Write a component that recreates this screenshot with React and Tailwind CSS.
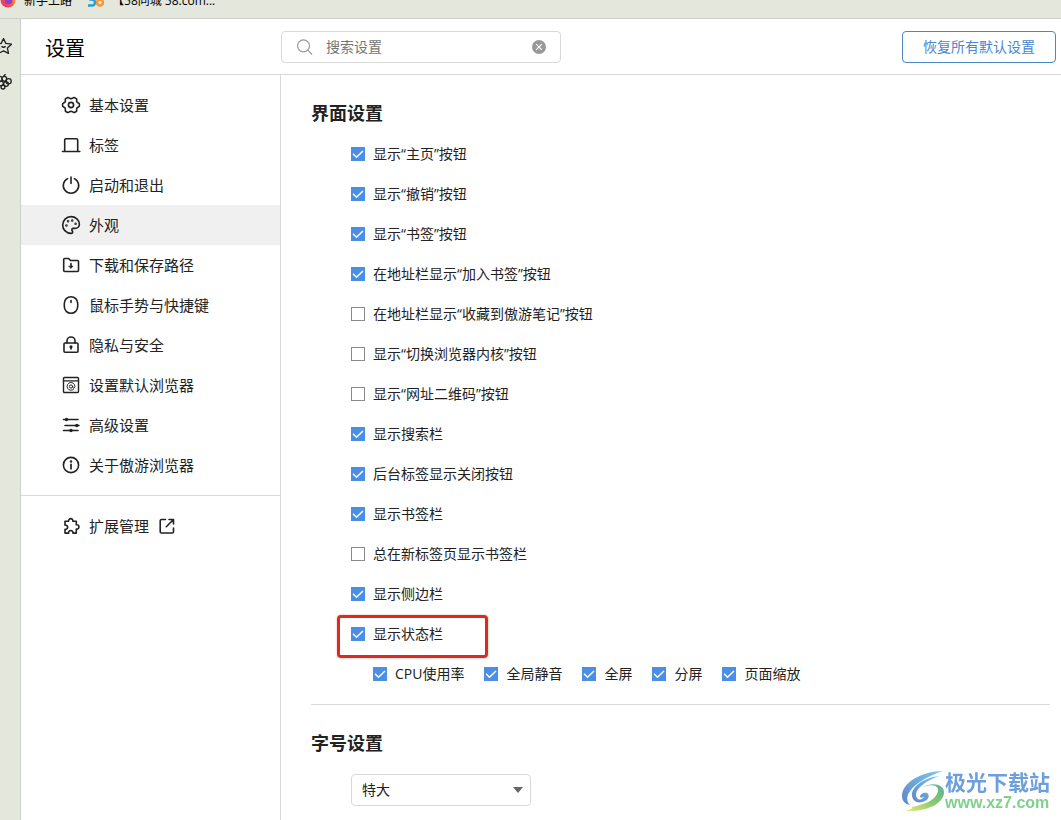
import React, { useState } from 'react';
import { Palette } from 'lucide-react';

const Icon = ({ children }) => (
    <svg
        viewBox="0 0 20 20"
        className="size-5 shrink-0"
        fill="none"
        stroke="currentColor"
        strokeWidth="1.6"
        strokeLinecap="round"
        strokeLinejoin="round"
        aria-hidden="true"
    >
        {children}
    </svg>
);

const icons = {
    gear: (
        <Icon>
            <path d="M18.3 8.6q.3 1.4 0 2.8l-2.1 1.3q-.5.4-.5.9l-.1 2.5q-1 1-2.5 1.5l-2.2-1.1q-.9-.3-1.8 0l-2.2 1.1q-1.5-.5-2.5-1.5l-.1-2.5q0-.5-.5-.9L1.700 11.400q-.3-1.400 0-2.800l2.100-1.300q.5-.4.5-.9l.1-2.500q1-1 2.500-1.500l2.200 1.100q.9.3 1.800 0l2.200-1.100q1.500.5 2.500 1.500l.1 2.500q0 .5.5.9z" />
            <circle cx="10" cy="10" r="2.6" />
        </Icon>
    ),
    tab: (
        <Icon>
            <path d="M1.500 16.500h17.300M3.700 16.500V5A1.300 1.300 0 0 1 5 3.700h10.400A1.300 1.300 0 0 1 16.700 5v11.500" />
        </Icon>
    ),
    power: (
        <Icon>
            <path d="M6.600 3.600a7.700 7.700 0 1 0 6.800 0M10 2v6.500" />
        </Icon>
    ),
    palette: <Palette className="size-5 shrink-0" strokeWidth={2} aria-hidden="true" />,
    folder: (
        <Icon>
            <path d="M2.700 4.500a1 1 0 0 1 1-1h4l1.800 2h7a1 1 0 0 1 1 1v9a1 1 0 0 1-1 1H3.700a1 1 0 0 1-1-1zM10 8.500v3" />
            <path d="M7.800 11h4.400L10 13.600z" fill="currentColor" strokeWidth="0.4" />
        </Icon>
    ),
    mouse: (
        <Icon>
            <rect x="3.300" y="1.700" width="13.400" height="16.600" rx="6.700" />
            <path d="M10 5.500v2" />
        </Icon>
    ),
    lock: (
        <Icon>
            <rect x="3" y="8" width="14" height="9.300" rx="1" />
            <path d="M6 8V6a4 4 0 0 1 8 0v2M10 12v2" />
            <circle cx="10" cy="11.800" r="0.800" fill="currentColor" />
        </Icon>
    ),
    browser: (
        <Icon>
            <rect x="2.500" y="2.500" width="15" height="15" rx="1" strokeWidth="1.400" />
            <path d="M2.500 5.900h15" strokeWidth="1.400" />
            <path d="M12.600 14.300a3.900 3.900 0 1 1 1.300-2.800q-.1 1.600-1.200 1.600-1 0-1-1.300" strokeWidth="1" />
            <circle cx="10" cy="11.500" r="1.600" strokeWidth="1" />
        </Icon>
    ),
    sliders: (
        <Icon>
            <path d="M2.500 4.500h14.500M4 10.500h14M2.500 15.500h14.500" />
            <g fill="currentColor" stroke="none">
                <circle cx="5.500" cy="4.500" r="1.700" />
                <circle cx="15.800" cy="10.500" r="1.700" />
                <circle cx="10" cy="15.500" r="1.700" />
            </g>
        </Icon>
    ),
    info: (
        <Icon>
            <circle cx="10" cy="10" r="7.600" />
            <path d="M10 9.300v4.500" strokeWidth="1.700" />
            <circle cx="10" cy="6.500" r="0.500" fill="currentColor" />
        </Icon>
    ),
    puzzle: (
        <Icon>
            <path d="M4 5.300h3.600a2.200 2.200 0 1 1 4.300 0h3.400v3.500a2.200 2.200 0 1 1 0 4.300v4h-3.400a2.200 2.200 0 1 0-4.300 0H4v-3.700a2.200 2.200 0 1 0 0-4.300z" />
        </Icon>
    ),
    external: (
        <Icon>
            <path d="M8.500 3.500H4.500a1.300 1.300 0 0 0-1.300 1.300v10.900A1.300 1.300 0 0 0 4.500 17h10.700a1.300 1.300 0 0 0 1.300-1.300V12M9.300 10.700l7.200-7.200M12 3.500h4.500V8" />
        </Icon>
    ),
};

const navItems = [
    { label: '基本设置', icon: 'gear' },
    { label: '标签', icon: 'tab' },
    { label: '启动和退出', icon: 'power' },
    { label: '外观', icon: 'palette' },
    { label: '下载和保存路径', icon: 'folder' },
    { label: '鼠标手势与快捷键', icon: 'mouse' },
    { label: '隐私与安全', icon: 'lock' },
    { label: '设置默认浏览器', icon: 'browser' },
    { label: '高级设置', icon: 'sliders' },
    { label: '关于傲游浏览器', icon: 'info' },
];

const interfaceOptions = [
    { label: '显示“主页”按钮', checked: true },
    { label: '显示“撤销”按钮', checked: true },
    { label: '显示“书签”按钮', checked: true },
    { label: '在地址栏显示“加入书签”按钮', checked: true },
    { label: '在地址栏显示“收藏到傲游笔记”按钮', checked: false },
    { label: '显示“切换浏览器内核”按钮', checked: false },
    { label: '显示“网址二维码”按钮', checked: false },
    { label: '显示搜索栏', checked: true },
    { label: '后台标签显示关闭按钮', checked: true },
    { label: '显示书签栏', checked: true },
    { label: '总在新标签页显示书签栏', checked: false },
    { label: '显示侧边栏', checked: true },
    { label: '显示状态栏', checked: true, highlight: true },
];

const statusBarOptions = ['CPU使用率', '全局静音', '全屏', '分屏', '页面缩放'];

const Checkbox = ({ label, defaultChecked }) => (
    <label className="flex items-center gap-2">
        <span className="grid size-3.5 shrink-0">
            <input
                type="checkbox"
                defaultChecked={defaultChecked}
                className="peer col-start-1 row-start-1 size-3.5 appearance-none border border-[#8a8a8a] bg-white checked:border-[#4a8ee6] checked:bg-[#4a8ee6]"
            />
            <svg
                viewBox="0 0 14 14"
                className="pointer-events-none invisible col-start-1 row-start-1 size-3.5 peer-checked:visible"
                fill="none"
                stroke="white"
                strokeWidth="1.5"
                aria-hidden="true"
            >
                <path d="m2 6.800 3.500 3.400L12 4" />
            </svg>
        </span>
        <span>{label}</span>
    </label>
);

const BookmarkBar = () => (
    <div className="h-[19px] overflow-hidden border-b border-[#cdd0c8] bg-[#e3e7dc]">
        <div className="-mt-[7px] flex h-4 items-center text-xs leading-4 whitespace-nowrap text-black">
            <a href="#" className="flex items-center gap-2">
                <svg viewBox="0 0 16 16" className="size-4" aria-hidden="true">
                    <defs>
                        <linearGradient id="fox" x1="1" y1="0" x2="0" y2="1">
                            <stop offset="0" stopColor="#ffc43a" />
                            <stop offset="0.5" stopColor="#ff5a3b" />
                            <stop offset="1" stopColor="#e8267c" />
                        </linearGradient>
                    </defs>
                    <circle cx="8" cy="7" r="7.500" fill="url(#fox)" />
                    <circle cx="8.500" cy="7.500" r="3.800" fill="#8a3fd0" />
                </svg>
                新手上路
            </a>
            <a href="#" className="ml-4 flex items-center gap-2">
                <svg viewBox="0 0 16 16" className="size-4" fill="none" strokeWidth="2.500" aria-hidden="true">
                    <path d="M7 2H2.500v4.500H4a3 3 0 0 1 0 6H0" stroke="#2f9bd0" />
                    <circle cx="12" cy="9.600" r="3" stroke="#f29a3a" />
                    <circle cx="12" cy="4" r="2.300" stroke="#f29a3a" />
                </svg>
                【58同城 58.com...
            </a>
        </div>
    </div>
);

const SideRail = () => (
    <aside className="flex w-[21px] shrink-0 flex-col gap-5 overflow-hidden border-r border-[#cdd0c8] bg-[#e3e7dc] pt-[19px] text-[#222]">
        <svg viewBox="0 0 16 16" className="-ml-1 size-4" fill="none" stroke="currentColor" strokeWidth="1.300" strokeLinejoin="round" aria-hidden="true">
            <path d="m7.500.5 2.300 4.900 5.900.7-4.300 4 1.100 5.300-5-2.600-5 2.600 1.100-5.300-4.300-4 5.900-.7z" />
            <path d="M5.500 8.300q2 2 4.200 0" />
        </svg>
        <svg viewBox="0 0 16 16" className="-ml-1 size-4" fill="none" stroke="currentColor" strokeWidth="1.300" aria-hidden="true">
            <circle cx="3.500" cy="5" r="2.600" />
            <circle cx="8.300" cy="4.700" r="2.400" />
            <circle cx="12.600" cy="7.300" r="2.600" />
            <circle cx="5" cy="9.500" r="2.400" />
            <circle cx="10" cy="10" r="2.400" />
            <circle cx="7" cy="13" r="2" />
            <path d="M7.500 2.500 9.500 0" />
        </svg>
    </aside>
);

const Header = () => {
    const [query, setQuery] = useState('');

    return (
        <header className="flex h-14 items-start border-b border-[#d9d9d9] pt-3 pr-[5px]">
            <h1 className="w-[260px] shrink-0 pl-6 text-xl leading-9 text-black">设置</h1>
            <div className="flex h-8 w-[280px] items-center rounded border border-[#d9d9d9] px-3.5">
                <svg viewBox="0 0 18 18" className="size-[18px] shrink-0 text-[#999]" fill="none" stroke="currentColor" strokeWidth="1.200" aria-hidden="true">
                    <circle cx="7.500" cy="7.800" r="6" />
                    <path d="m11.800 12.200 4.200 4.300" />
                </svg>
                <input
                    type="text"
                    aria-label="搜索设置"
                    placeholder="搜索设置"
                    value={query}
                    onChange={(e) => setQuery(e.target.value)}
                    className="ml-3 min-w-0 flex-1 text-sm outline-none placeholder:text-[#757575]"
                />
                <button type="button" aria-label="清除" onClick={() => setQuery('')}>
                    <svg viewBox="0 0 14 14" className="size-3.5" aria-hidden="true">
                        <circle cx="7" cy="7" r="7" fill="#999" />
                        <path d="m4.200 4.200 5.600 5.600m0-5.600L4.200 9.800" stroke="white" strokeWidth="1.200" />
                    </svg>
                </button>
            </div>
            <button type="button" className="ml-auto h-8 rounded border border-[#4a88c2] px-5 text-sm whitespace-nowrap text-[#4a86d0]">
                恢复所有默认设置
            </button>
        </header>
    );
};

const Sidebar = () => (
    <nav className="w-[260px] shrink-0 border-r border-[#d9d9d9] pt-2.5 text-[15px] text-[#222]">
        {navItems.map((item) => (
            <a
                key={item.label}
                href="#"
                className={`flex h-10 items-center gap-2 pl-10 ${item.label === '外观' ? 'bg-[#f0f0f0]' : ''}`}
            >
                {icons[item.icon]}
                {item.label}
            </a>
        ))}
        <div className="mt-2.5 border-t border-[#d9d9d9] pt-2.5">
            <a href="#" className="flex h-10 items-center gap-2 pl-10">
                {icons.puzzle}
                扩展管理
                {icons.external}
            </a>
        </div>
    </nav>
);

const Watermark = () => (
    <div className="pointer-events-none fixed right-[11px] bottom-2 flex items-center">
        <svg viewBox="0 0 44 42" className="h-[42px] w-11" aria-hidden="true">
            <defs>
                <linearGradient id="swirlBlue" x1="1" y1="0" x2="0" y2="1">
                    <stop offset="0" stopColor="#7cc8f2" />
                    <stop offset="1" stopColor="#5f86c6" />
                </linearGradient>
                <linearGradient id="swirlGreen" x1="1" y1="0" x2="0" y2="1">
                    <stop offset="0" stopColor="#5cae9e" />
                    <stop offset="0.5" stopColor="#86cc6c" />
                    <stop offset="1" stopColor="#e9e67a" />
                </linearGradient>
            </defs>
            <path d="M42 1C22 1 1 12 1 26c0 5 3 8 8 9C1 27 10 12 42 1z" fill="url(#swirlBlue)" />
            <path d="M38 6C22 8 10 17 11 26c1 6 7 8 13 5 4-2 5-6 2-8-3-1-7 1-7 4 1 1 3 1 4-1 0 3-5 5-7 2C12 21 22 12 38 6z" fill="url(#swirlBlue)" />
            <path d="M23 17c9-4 17-1 13 7-4 7-13 11-26 13l2 1-7 3c20 1 37-7 38-18 1-9-13-11-20-6z" fill="url(#swirlGreen)" />
        </svg>
        <div className="whitespace-nowrap">
            <div className="text-[21px] leading-6 font-bold text-[#6c9fdb]">极光下载站</div>
            <div className="font-['Liberation_Sans'] text-base leading-[18px] font-bold text-[#7fd08c]">www.xz7.com</div>
        </div>
    </div>
);

const App = () => (
    <div className="flex min-h-screen flex-col bg-white font-['Open_Sans','Noto_Sans_CJK_SC',sans-serif] text-[#222]">
        <BookmarkBar />
        <div className="flex flex-1">
            <SideRail />
            <div className="flex min-w-0 flex-1 flex-col">
                <Header />
                <div className="flex flex-1">
                    <Sidebar />
                    <main className="min-w-0 flex-1 pr-[11px] pl-[30px] text-sm">
                        <section className="border-b border-[#d9d9d9] pt-[18px] pb-2.5">
                            <h2 className="text-lg leading-10 font-bold">界面设置</h2>
                            <ul className="pt-px pl-10">
                                {interfaceOptions.map((option) => (
                                    <li key={option.label} className="relative flex h-10 items-center">
                                        <Checkbox label={option.label} defaultChecked={option.checked} />
                                        {option.highlight && (
                                            <div className="pointer-events-none absolute top-px -left-[14px] h-[43px] w-[151px] rounded-sm border-3 border-[#dc2a22] shadow-[0_0_2px_#ff9a90]" />
                                        )}
                                    </li>
                                ))}
                            </ul>
                            <div className="flex h-10 items-center gap-5 pl-[62px] whitespace-nowrap">
                                {statusBarOptions.map((label) => (
                                    <Checkbox key={label} label={label} defaultChecked />
                                ))}
                            </div>
                        </section>

                        <section className="pt-[18px]">
                            <h2 id="font-size-title" className="text-lg leading-10 font-bold">字号设置</h2>
                            <div className="mt-[11px] ml-10 grid w-[180px] items-center">
                                <select
                                    aria-labelledby="font-size-title"
                                    defaultValue="特大"
                                    className="col-start-1 row-start-1 h-8 appearance-none rounded border border-[#d9d9d9] bg-white px-2.5"
                                >
                                    <option>小</option>
                                    <option>中</option>
                                    <option>大</option>
                                    <option>特大</option>
                                </select>
                                <svg viewBox="0 0 10 6" className="pointer-events-none col-start-1 row-start-1 mr-2 h-1.5 w-2.5 justify-self-end" aria-hidden="true">
                                    <path d="M0 0h10L5 6z" fill="#666" />
                                </svg>
                            </div>
                        </section>
                    </main>
                </div>
            </div>
        </div>
        <Watermark />
    </div>
);

export default App;
